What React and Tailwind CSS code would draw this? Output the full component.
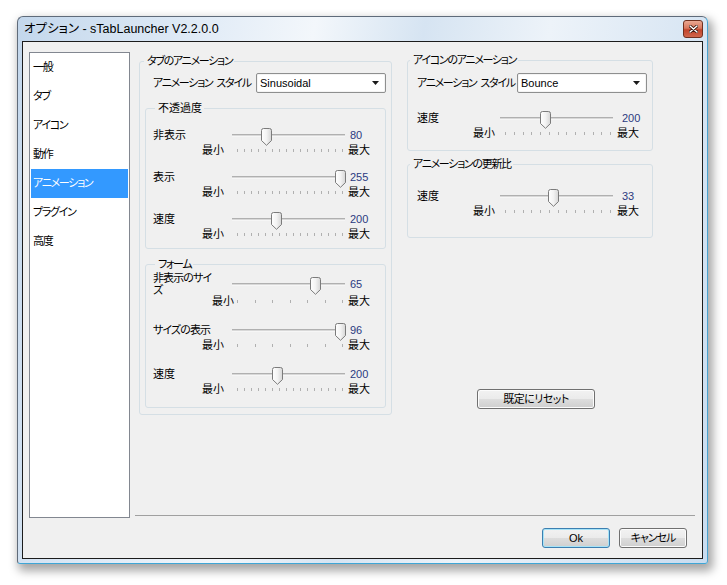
import React from 'react'

const FONT = "font-['Liberation_Sans','Noto_Sans_CJK_JP',sans-serif] [font-feature-settings:'palt']"
const KANA = 'tracking-[-1.3px]'

const menuItems = ['一般', 'タブ', 'アイコン', '動作', 'アニメーション', 'プラグイン', '高度']

const layouts = {
  left: { label: 'w-[79px]', pad: 'w-[49px]', min: 'w-[17px]', gap: 'w-[13px]', value: 'ml-[5px]', max: 'ml-[3px]' },
  form: { label: 'w-[79px]', pad: 'w-[59px]', min: 'w-[17px]', gap: 'w-[3px]', value: 'ml-[5px]', max: 'ml-[3px]' },
  right: { label: 'w-[83px]', pad: 'w-[56px]', min: 'w-[17px]', gap: 'w-[10px]', value: 'ml-[9px]', max: 'ml-[4px]' },
}

function Thumb({ pos }) {
  return (
    <svg width="11" height="18" viewBox="0 0 11 18" className="absolute top-px" style={{ left: pos - 5 }}>
      <defs>
        <linearGradient id="thumbFill" x1="0" y1="0" x2="1" y2="0">
          <stop offset="0" stopColor="#ffffff" />
          <stop offset="0.5" stopColor="#f3f3f3" />
          <stop offset="1" stopColor="#d6d6d6" />
        </linearGradient>
      </defs>
      <path
        d="M0.5 2.5 Q0.5 0.5 2.5 0.5 H8.5 Q10.5 0.5 10.5 2.5 V12.5 L5.5 17.3 L0.5 12.5 Z"
        fill="url(#thumbFill)"
        stroke="#7b7b7b"
      />
    </svg>
  )
}

function Track({ pos }) {
  return (
    <div className="relative flex h-[16px] w-[113px] shrink-0 items-center">
      <div className="h-[3px] w-full border-y border-t-[#b0b0b0] border-b-[#f6f6f6] bg-[#d8d8d8]" />
      <Thumb pos={pos} />
    </div>
  )
}

function Ticks({ count }) {
  return (
    <div className="flex w-[113px] shrink-0 justify-between pl-[5px] pr-[2px]">
      {Array.from({ length: count }).map((_, i) => (
        <span key={i} className="h-[3px] w-px bg-[#b0b0b0]" />
      ))}
    </div>
  )
}

function SliderRow({ label, value, pos, ticks, layout = 'left', tall = false, kana = false }) {
  const l = layouts[layout]
  return (
    <div className="flex flex-col">
      <div className={`flex items-center ${tall ? 'h-[24px]' : 'h-[16px]'}`}>
        <div className={`${l.label} shrink-0 whitespace-nowrap leading-[12px] ${kana ? 'tracking-[-0.9px]' : ''}`}>{label}</div>
        <Track pos={pos} />
        <span className={`${l.value} text-[#2b3a80]`}>{value}</span>
      </div>
      <div className={`flex h-[14px] items-center ${tall ? '-mt-[2px]' : ''}`}>
        <div className={`${l.pad} shrink-0`} />
        <div className={`${l.min} shrink-0 whitespace-nowrap`}>最小</div>
        <div className={`${l.gap} shrink-0`} />
        <Ticks count={ticks} />
        <span className={`${l.max} whitespace-nowrap`}>最大</span>
      </div>
    </div>
  )
}

function Combo({ text }) {
  return (
    <div className="flex h-[20px] w-[130px] shrink-0 items-center justify-between rounded-[2px] border border-[#8e8f8f] bg-white pl-[3px] pr-[6px] shadow-[inset_0_0_0_1px_#f4f4f4]">
      <span>{text}</span>
      <svg width="7" height="4" viewBox="0 0 7 4">
        <path d="M0 0 H7 L3.5 4 Z" fill="#1a1a1a" />
      </svg>
    </div>
  )
}

function StyleLabel({ className = '' }) {
  return (
    <span className={`flex shrink-0 whitespace-nowrap ${KANA} ${className}`}>
      <span>アニメーション</span>
      <span className="ml-[4px]">スタイル</span>
    </span>
  )
}

function Legend({ children, className = '' }) {
  return <legend className={`whitespace-nowrap pl-[3px] pr-[2px] leading-[14px] ${className}`}>{children}</legend>
}

function VistaButton({ children, primary = false, className = '' }) {
  return (
    <button
      type="button"
      className={`flex h-[20px] items-center justify-center rounded-[3px] border bg-[linear-gradient(#f2f2f2_0%,#ebebeb_48%,#dddddd_52%,#cfcfcf_100%)] ${
        primary ? 'border-[#3c7fb1] shadow-[inset_0_0_0_1px_#a6e3f7]' : 'border-[#707070] shadow-[inset_0_0_0_1px_#fcfcfc]'
      } ${className}`}
    >
      {children}
    </button>
  )
}

export default function App() {
  return (
    <div className={`h-[585px] w-[727px] overflow-hidden bg-white pt-[16px] text-[11px] text-black ${FONT}`}>
      <div className="ml-[17px] flex h-[548px] w-[691px] flex-col rounded-t-[6px] rounded-b-[3px] border border-[#5f6b7a] border-r-[#4aa3cf] border-b-[#3ea6d6] bg-[linear-gradient(100deg,#c3d7ec_0%,#dfeaf6_22%,#f3f7fb_38%,#d6e4f2_52%,#edf3f9_68%,#c9dcef_100%)] shadow-[3px_5px_10px_2px_rgba(0,0,0,0.35)]">
        <div className="flex h-[24px] items-center justify-between pl-[6px] pr-[4px]">
          <span className="text-[12.5px]">オプション - sTabLauncher V2.2.0.0</span>
          <div className="flex h-[18px] w-[20px] items-center justify-center rounded-[3px] border border-[#70301f] bg-[linear-gradient(#eaa892_0%,#d9775d_45%,#c2432a_55%,#d0664c_100%)]">
            <svg width="9" height="8" viewBox="0 0 9 8">
              <path d="M1 1 L8 7 M8 1 L1 7" stroke="#3d1a12" strokeWidth="3" strokeLinecap="round" />
              <path d="M1 1 L8 7 M8 1 L1 7" stroke="#ffffff" strokeWidth="1.4" strokeLinecap="round" />
            </svg>
          </div>
        </div>

        <div className="mx-[4px] mb-[4px] flex flex-1 flex-col border border-[#1c1c1c] bg-[#f0f0f0]">
          <div className="flex pl-[6px] pt-[10px]">
            <div className="flex h-[466px] w-[101px] shrink-0 flex-col border border-[#828790] bg-white px-px">
              {menuItems.map((item) => (
                <div
                  key={item}
                  className={`flex h-[29px] items-center whitespace-nowrap pl-[2px] ${KANA} ${item === 'アニメーション' ? 'bg-[#3399ff] text-white' : ''}`}
                >
                  {item}
                </div>
              ))}
            </div>

            <div className="ml-[5px] flex h-[464px] w-[560px] gap-[15px] border-b border-[#a0a0a0] pl-[4px]">
              <fieldset className="mt-[2px] flex h-[361px] w-[253px] flex-col rounded-[3px] border border-[#d5dfe5]">
                <Legend className={`ml-[4px] ${KANA}`}>タブのアニメーション</Legend>
                <div className="mt-[5px] flex items-center pl-[13px]">
                  <StyleLabel className="w-[103px]" />
                  <Combo text="Sinusoidal" />
                </div>

                <fieldset className="mx-[5px] mt-[8px] flex flex-col gap-[12px] rounded-[3px] border border-[#d5dfe5] pb-[7px] pl-[7px]">
                  <Legend className="ml-[2px]">不透過度</Legend>
                  <div className="mt-[12px]">
                    <SliderRow label="非表示" value="80" pos={34} ticks={16} />
                  </div>
                  <SliderRow label="表示" value="255" pos={108} ticks={16} />
                  <SliderRow label="速度" value="200" pos={44} ticks={16} />
                </fieldset>

                <fieldset className="mx-[5px] mt-[8px] flex flex-col gap-[14px] rounded-[3px] border border-[#d5dfe5] pb-[11px] pl-[7px]">
                  <Legend className={`ml-[2px] ${KANA}`}>フォーム</Legend>
                  <div className="mt-px">
                    <SliderRow
                      label={
                        <>
                          非表示のサイ
                          <br />ズ
                        </>
                      }
                      value="65"
                      pos={83}
                      ticks={7}
                      layout="form"
                      tall
                      kana
                    />
                  </div>
                  <SliderRow label="サイズの表示" value="96" pos={108} ticks={7} kana />
                  <SliderRow label="速度" value="200" pos={45} ticks={16} />
                </fieldset>
              </fieldset>

              <div className="flex w-[246px] flex-col">
                <fieldset className="mt-px flex flex-col rounded-[3px] border border-[#d5dfe5] pb-[10px]">
                  <Legend className={`ml-[2px] ${KANA}`}>アイコンのアニメーション</Legend>
                  <div className="mt-[6px] flex items-center pl-[9px]">
                    <StyleLabel className="w-[100px]" />
                    <Combo text="Bounce" />
                  </div>
                  <div className="mt-[17px] pl-[9px]">
                    <SliderRow label="速度" value="200" pos={45} ticks={13} layout="right" />
                  </div>
                </fieldset>

                <fieldset className="mt-[6px] flex flex-col rounded-[3px] border border-[#d5dfe5] pb-[19px]">
                  <Legend className={`ml-[2px] ${KANA}`}>アニメーションの更新比</Legend>
                  <div className="mt-[17px] pl-[9px]">
                    <SliderRow label="速度" value="33" pos={53} ticks={13} layout="right" />
                  </div>
                </fieldset>

                <VistaButton className="ml-[70px] mt-[151px] w-[118px] tracking-[-0.5px]">既定にリセット</VistaButton>
              </div>
            </div>
          </div>

          <div className="mt-[10px] flex justify-end gap-[9px] pr-[15px]">
            <VistaButton primary className="w-[68px]">
              Ok
            </VistaButton>
            <VistaButton className="w-[68px] tracking-[-1px]">キャンセル</VistaButton>
          </div>
        </div>
      </div>
    </div>
  )
}
